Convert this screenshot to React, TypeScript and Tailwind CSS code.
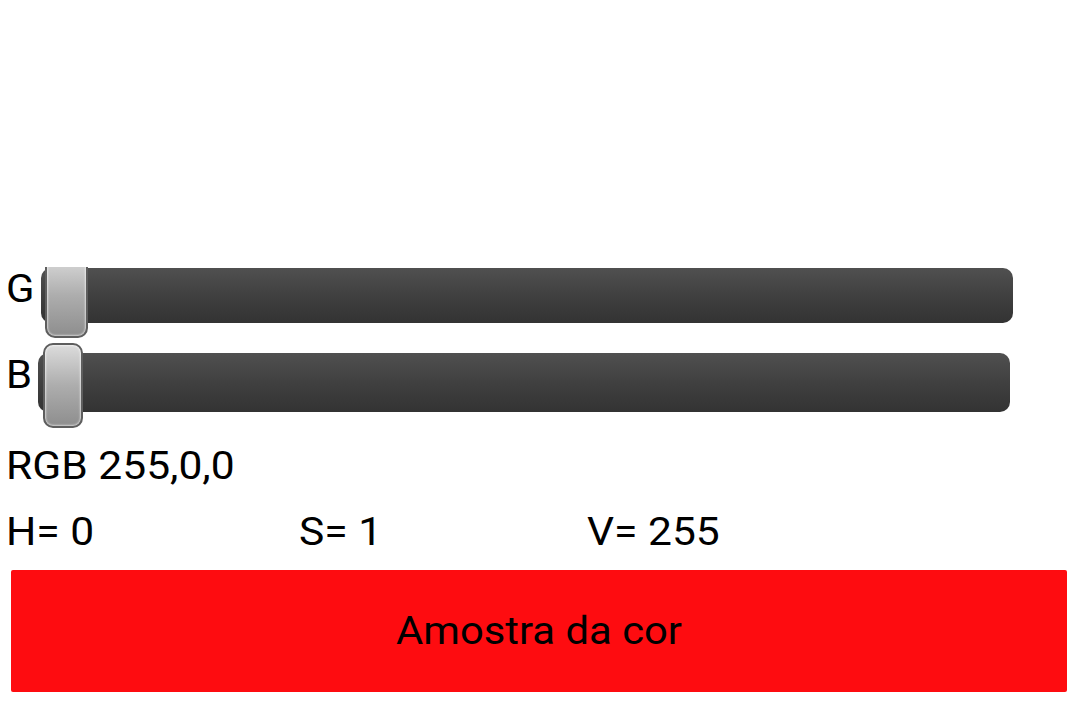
import React from "react";

function Thumb({ className }: { className: string }) {
  return (
    <div
      className={
        "absolute rounded-[10px] border-2 border-[#5e5e5e] bg-gradient-to-b from-[#dcdcdc] via-[#adadad] to-[#8e8e8e] shadow-[inset_0_0_2px_1px_rgba(255,255,255,0.6)] " +
        className
      }
    />
  );
}

export default function App() {
  return (
    <div
      className="w-[1075px] h-[701px] bg-white overflow-hidden text-black"
      style={{ fontFamily: "Roboto, 'Noto Sans', sans-serif" }}
    >
      <div className="h-[267px]" />

      {/* G row */}
      <div className="flex h-[71px] overflow-hidden">
        <div className="w-[41px] pl-[6px] text-[38px] leading-[45px]">
          <div className="origin-left scale-x-[1.1]">G</div>
        </div>
        <div className="relative w-[972px]">
          <div className="mt-[1px] h-[55px] rounded-[10px] bg-gradient-to-b from-[#505050] via-[#404040] to-[#333333]" />
          <Thumb className="left-[4px] top-[-14px] h-[85px] w-[43px]" />
        </div>
      </div>

      {/* B row */}
      <div className="mt-[5px] flex h-[85px]">
        <div className="w-[38px] pl-[6px] pt-[10px] text-[38px] leading-[45px]">
          <div className="origin-left scale-x-[1.1]">B</div>
        </div>
        <div className="relative w-[972px]">
          <div className="mt-[10px] h-[59px] rounded-[10px] bg-gradient-to-b from-[#505050] via-[#404040] to-[#333333]" />
          <Thumb className="left-[5px] top-0 h-[85px] w-[40px]" />
        </div>
      </div>

      <div className="mt-[16px] pl-[6px] text-[38px] leading-[45px]">
        <div className="origin-left scale-x-[1.12]">RGB 255,0,0</div>
      </div>

      <div className="mt-[21px] flex pl-[6px] text-[38px] leading-[45px]">
        <div className="w-[293px]">
          <div className="origin-left scale-x-[1.12]">H= 0</div>
        </div>
        <div className="w-[288px]">
          <div className="origin-left scale-x-[1.12]">S= 1</div>
        </div>
        <div>
          <div className="origin-left scale-x-[1.12]">V= 255</div>
        </div>
      </div>

      <div className="ml-[11px] mt-[15px] flex h-[122px] w-[1056px] items-center justify-center rounded-[2px] bg-[#fe0c10] text-[38px] leading-[45px]">
        <div className="scale-x-[1.1]">Amostra da cor</div>
      </div>
    </div>
  );
}
